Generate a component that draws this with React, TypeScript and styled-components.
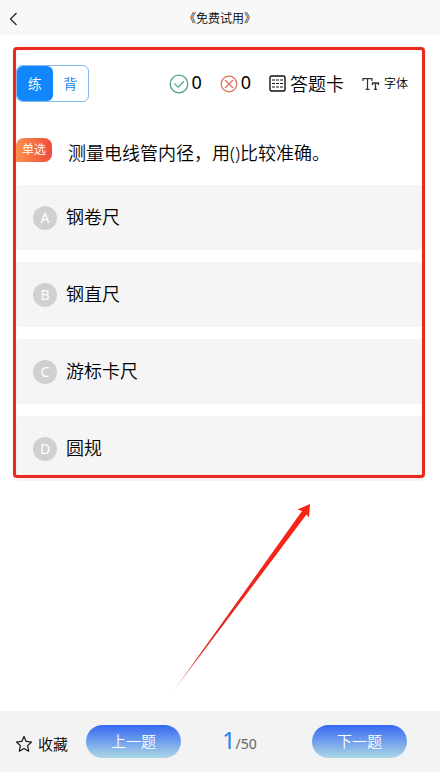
import React, { useState } from "react";
import styled, { createGlobalStyle } from "styled-components";

const GlobalStyle = createGlobalStyle`
  * { box-sizing: border-box; }
  body {
    margin: 0;
    background: #fff;
    color: #000;
    font-family: "Noto Sans", "Noto Sans CJK SC", sans-serif;
    font-weight: 350;
  }
  button {
    margin: 0;
    padding: 0;
    border: 0;
    background: none;
    color: inherit;
    font-family: inherit;
    font-weight: inherit;
    cursor: pointer;
  }
  svg { display: block; flex: none; }
`;

const Page = styled.div`
  min-height: 100vh;
  display: flex;
  flex-direction: column;
`;

const Header = styled.header`
  display: grid;
  grid-template-columns: 40px 1fr 40px;
  align-items: center;
  height: 35px;
  background: #f8f8f8;
`;

const BackButton = styled.button`
  display: flex;
  padding: 2px 0 0 8px;
`;

const Title = styled.h1`
  margin: 0;
  padding-top: 2px;
  font-size: 12px;
  line-height: 20px;
  font-weight: inherit;
  text-align: center;
  color: #000;
`;

const Main = styled.main`
  position: relative;
  flex: 1;
  padding: 30px 16px 0;
`;

const Frame = styled.div`
  position: absolute;
  inset: 12px 15px auto 13px;
  height: 431px;
  border: 3px solid #e92a20;
  border-radius: 4px;
  box-shadow: 0 0 1px #f9a39d, inset 0 0 1px #f9a39d;
  pointer-events: none;
`;

const Arrow = styled.svg`
  position: absolute;
  left: 170px;
  top: 467px;
  pointer-events: none;
`;

const Toolbar = styled.div`
  display: flex;
  align-items: center;
  justify-content: space-between;
  height: 37px;
`;

const ModeSwitch = styled.div`
  display: flex;
  width: 73px;
  height: 37px;
  border: 1px solid #85b9ee;
  border-radius: 6px;
`;

const ModeButton = styled.button<{ $active: boolean }>`
  flex: 1;
  padding-bottom: 2px;
  border-radius: 6px;
  font-size: 14px;
  color: ${(p) => (p.$active ? "#fff" : "#1080e8")};
  background: ${(p) => (p.$active ? "#1287fb" : "transparent")};
`;

const Tools = styled.div`
  display: flex;
  align-items: center;
  padding-right: 16px;
`;

const Score = styled.div<{ $gap: number }>`
  display: flex;
  align-items: center;
  gap: ${(p) => p.$gap}px;
  margin-right: 18px;
`;

const Count = styled.span`
  padding-bottom: 4px;
  font-size: 18px;
  font-weight: 400;
  line-height: 24px;
`;

const ToolButton = styled.button<{ $size: number }>`
  display: flex;
  align-items: center;
  gap: 4px;
  font-size: ${(p) => p.$size}px;
  line-height: 26px;

  & + & {
    margin-left: 18px;
  }
`;

const Question = styled.div`
  display: flex;
  align-items: center;
  gap: 16px;
  min-height: 64px;
  margin-top: 19px;
`;

const Tag = styled.span`
  align-self: flex-start;
  flex: none;
  width: 36px;
  margin-top: 17px;
  border-radius: 8px 8px 8px 0;
  background: linear-gradient(90deg, #fa914c, #ef4b3b);
  color: #fff;
  font-size: 12px;
  line-height: 24px;
  text-align: center;
`;

const QuestionText = styled.p`
  margin: 0;
  font-size: 18px;
  line-height: 26px;
`;

const Options = styled.div`
  display: flex;
  flex-direction: column;
  gap: 12px;
  margin-right: -1px;
`;

const Option = styled.button`
  display: flex;
  align-items: center;
  gap: 9px;
  height: 65px;
  padding-left: 17px;
  border-radius: 4px;
  background: #f5f5f5;
  font-size: 18px;
  text-align: left;
`;

const OptionText = styled.span`
  padding-bottom: 1px;
  line-height: 26px;
`;

const Letter = styled.span`
  width: 24px;
  height: 24px;
  border-radius: 50%;
  background: #d0d0d0;
  color: #fff;
  font-size: 14px;
  font-weight: 400;
  line-height: 24px;
  text-align: center;
`;

const Footer = styled.footer`
  display: flex;
  align-items: center;
  justify-content: space-between;
  height: 61px;
  padding: 0 33px 0 15px;
  background: #f3f3f3;
`;

const FooterGroup = styled.div`
  display: flex;
  align-items: center;
  gap: 18px;
`;

const Favorite = styled.button`
  display: flex;
  align-items: center;
  gap: 5px;
  padding-top: 4px;
  font-size: 15px;
  line-height: 22px;
`;

const NavButton = styled.button`
  width: 95px;
  height: 33px;
  padding-bottom: 2px;
  border-radius: 17px;
  background: linear-gradient(180deg, #3468f3, #add8e6);
  color: #fff;
  font-size: 15px;
  line-height: 22px;
`;

const Progress = styled.div`
  padding-right: 14px;
  font-size: 14px;
  font-weight: 400;
  line-height: 32px;
  color: #666;
`;

const Current = styled.span`
  font-size: 23px;
  color: #1b83ee;
`;

const options = [
  { letter: "A", text: "钢卷尺" },
  { letter: "B", text: "钢直尺" },
  { letter: "C", text: "游标卡尺" },
  { letter: "D", text: "圆规" },
];

const BackIcon = () => (
  <svg width="12" height="14" viewBox="0 0 12 14" fill="none" stroke="#222" strokeWidth="1.2">
    <path d="M8.5 1 2.5 7l6 6" />
  </svg>
);

const RightIcon = () => (
  <svg width="20" height="20" viewBox="0 0 20 20" fill="none" stroke="#4fa67c" strokeWidth="1.3">
    <circle cx="10" cy="10" r="8.8" />
    <path d="m5.2 9.4 4 3.8 5.8-6" />
  </svg>
);

const WrongIcon = () => (
  <svg width="18" height="18" viewBox="0 0 18 18" fill="none" stroke="#df705f" strokeWidth="1.2">
    <circle cx="9" cy="9" r="7.8" />
    <path d="m5 5 8 8M13 5l-8 8" />
  </svg>
);

const CardIcon = () => (
  <svg width="17" height="17" viewBox="0 0 17 17" fill="none" stroke="#111" strokeWidth="1.4">
    <rect x="1" y="1" width="15" height="15" rx="1.5" />
    <path d="M3 5h3M7 5h3M11 5h3M3 8.5h3M7 8.5h3M11 8.5h3M3 12h3M7 12h3M11 12h3" strokeWidth="1.2" />
  </svg>
);

const FontIcon = () => (
  <svg width="18" height="14" viewBox="0 0 18 14" fill="none" stroke="#333" strokeWidth="1.2">
    <path d="M1 4V1.6h9V4M5.5 1.6v10.8M3.5 12.4h4" />
    <path d="M10.5 8V6h6v2M13.5 6v6.4M12 12.4h3" strokeWidth="1.4" />
  </svg>
);

const StarIcon = () => (
  <svg width="18" height="18" viewBox="0 0 18 18" fill="none" stroke="#111" strokeWidth="1.2" strokeLinejoin="round">
    <path d="m9 1.5 2.2 4.9 5.3.6-3.9 3.6 1.1 5.6L9 13.5l-4.7 2.7 1.1-5.6L1.5 7l5.3-.6z" />
  </svg>
);

export default function App() {
  const [mode, setMode] = useState("练");

  return (
    <Page>
      <GlobalStyle />
      <Header>
        <BackButton aria-label="返回">
          <BackIcon />
        </BackButton>
        <Title>《免费试用》</Title>
      </Header>
      <Main>
        <Toolbar>
          <ModeSwitch>
            {["练", "背"].map((m) => (
              <ModeButton key={m} $active={m === mode} onClick={() => setMode(m)}>
                {m}
              </ModeButton>
            ))}
          </ModeSwitch>
          <Tools>
            <Score $gap={2}>
              <RightIcon />
              <Count>0</Count>
            </Score>
            <Score $gap={3}>
              <WrongIcon />
              <Count>0</Count>
            </Score>
            <ToolButton $size={18}>
              <CardIcon />
              答题卡
            </ToolButton>
            <ToolButton $size={12}>
              <FontIcon />
              字体
            </ToolButton>
          </Tools>
        </Toolbar>
        <Question>
          <Tag>单选</Tag>
          <QuestionText>测量电线管内径，用()比较准确。</QuestionText>
        </Question>
        <Options>
          {options.map((o) => (
            <Option key={o.letter}>
              <Letter>{o.letter}</Letter>
              <OptionText>{o.text}</OptionText>
            </Option>
          ))}
        </Options>
        <Frame />
        <Arrow width="144" height="192" viewBox="0 0 144 192">
          <defs>
            <linearGradient id="shaft" x1="0" y1="1" x2="1" y2="0">
              <stop offset="0" stopColor="#e0251b" stopOpacity="0.3" />
              <stop offset="0.2" stopColor="#d9291f" />
              <stop offset="0.6" stopColor="#f0251a" />
              <stop offset="1" stopColor="#fb2318" />
            </linearGradient>
          </defs>
          <path d="M2 191 132 9 127.500 7.500 140 2 139 15.500 136.500 12.500Z" fill="url(#shaft)" />
        </Arrow>
      </Main>
      <Footer>
        <FooterGroup>
          <Favorite>
            <StarIcon />
            收藏
          </Favorite>
          <NavButton>上一题</NavButton>
        </FooterGroup>
        <Progress>
          <Current>1</Current>/50
        </Progress>
        <NavButton>下一题</NavButton>
      </Footer>
    </Page>
  );
}
